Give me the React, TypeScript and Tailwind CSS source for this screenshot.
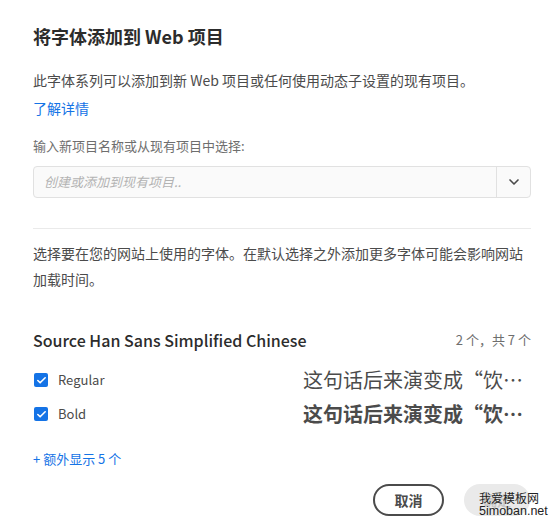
import { Check, ChevronDown } from "lucide-react";

const CJK = "font-['Noto_Sans_CJK_SC','Noto_Sans',sans-serif]";

const styles = [
  { name: "Regular", weight: "font-normal" },
  { name: "Bold", weight: "font-bold" },
];

export default function App() {
  return (
    <div className={`min-h-[527px] w-[560px] bg-white pl-[33px] pr-[29px] pt-[22px] text-[#4b4b4b] ${CJK}`}>
      <h1 className="text-[18px] font-bold leading-[28px] text-[#2c2c2c]">将字体添加到 Web 项目</h1>

      <p className="mt-[19px] text-[14px] leading-[22px] text-[#4b4b4b]">
        此字体系列可以添加到新 Web 项目或任何使用动态子设置的现有项目。
      </p>
      <a className="mt-[7px] block text-[14px] leading-[20px] text-[#1473e6]">了解详情</a>

      <label className="mt-[18px] block text-[13px] leading-[20px] text-[#6e6e6e]">
        输入新项目名称或从现有项目中选择:
      </label>
      <div className="mt-[10px] flex h-[32px] items-stretch rounded-[4px] border border-[#e1e1e1] bg-[#fafafa]">
        <span className="flex flex-1 items-center pl-[10px] text-[13px] italic text-[#b3b3b3]">
          创建或添加到现有项目..
        </span>
        <span className="flex w-[34px] items-center justify-center border-l border-[#e1e1e1] text-[#4b4b4b]">
          <ChevronDown size={16} strokeWidth={2.5} />
        </span>
      </div>

      <hr className="mt-[30px] border-[#eaeaea]" />

      <p className="mt-[11px] text-[14px] leading-[26px] text-[#4b4b4b]">
        选择要在您的网站上使用的字体。在默认选择之外添加更多字体可能会影响网站加载时间。
      </p>

      <div className="mt-[36px] flex items-center justify-between">
        <h2 className="text-[16px] font-medium leading-[24px] text-[#2c2c2c]">Source Han Sans Simplified Chinese</h2>
        <span className="text-[13px] text-[#6e6e6e]">2 个，共 7 个</span>
      </div>

      <div className="mt-[15px] flex flex-col gap-[8px]">
        {styles.map((s) => (
          <div key={s.name} className="flex h-[26px] items-center">
            <span className="ml-[1px] flex h-[14px] w-[14px] items-center justify-center rounded-[2px] bg-[#1473e6] text-white">
              <Check size={11} strokeWidth={3.5} />
            </span>
            <span className="ml-[10px] text-[13px] text-[#4b4b4b]">{s.name}</span>
            <span className={`ml-auto whitespace-nowrap pr-[8px] text-[20px] leading-[26px] text-[#4b4b4b] ${s.weight}`}>
              这句话后来演变成“饮…
            </span>
          </div>
        ))}
      </div>

      <a className="mt-[22px] block text-[13px] leading-[20px] text-[#1473e6]">+ 额外显示 5 个</a>

      <div className="mt-[15px] flex justify-end gap-[20px] pr-[1px]">
        <button
          type="button"
          className="h-[32px] w-[71px] rounded-full border-2 border-[#4b4b4b] text-[14px] font-bold text-[#4b4b4b]"
        >
          取消
        </button>
        <div className="relative">
          <button
            type="button"
            className="h-[32px] w-[66px] rounded-full bg-[#eaeaea] text-[14px] font-bold text-[#c8c8c8]"
          >
            确定
          </button>
          <div className="absolute left-[15px] top-[7px] text-[#222]">
            <div className={`${CJK} text-[12px] leading-[13px]`}>我爱模板网</div>
            <div className="mt-[1px] whitespace-nowrap font-['Liberation_Sans',sans-serif] text-[12.5px] leading-[13px]">
              5imoban.net
            </div>
          </div>
        </div>
      </div>
    </div>
  );
}
